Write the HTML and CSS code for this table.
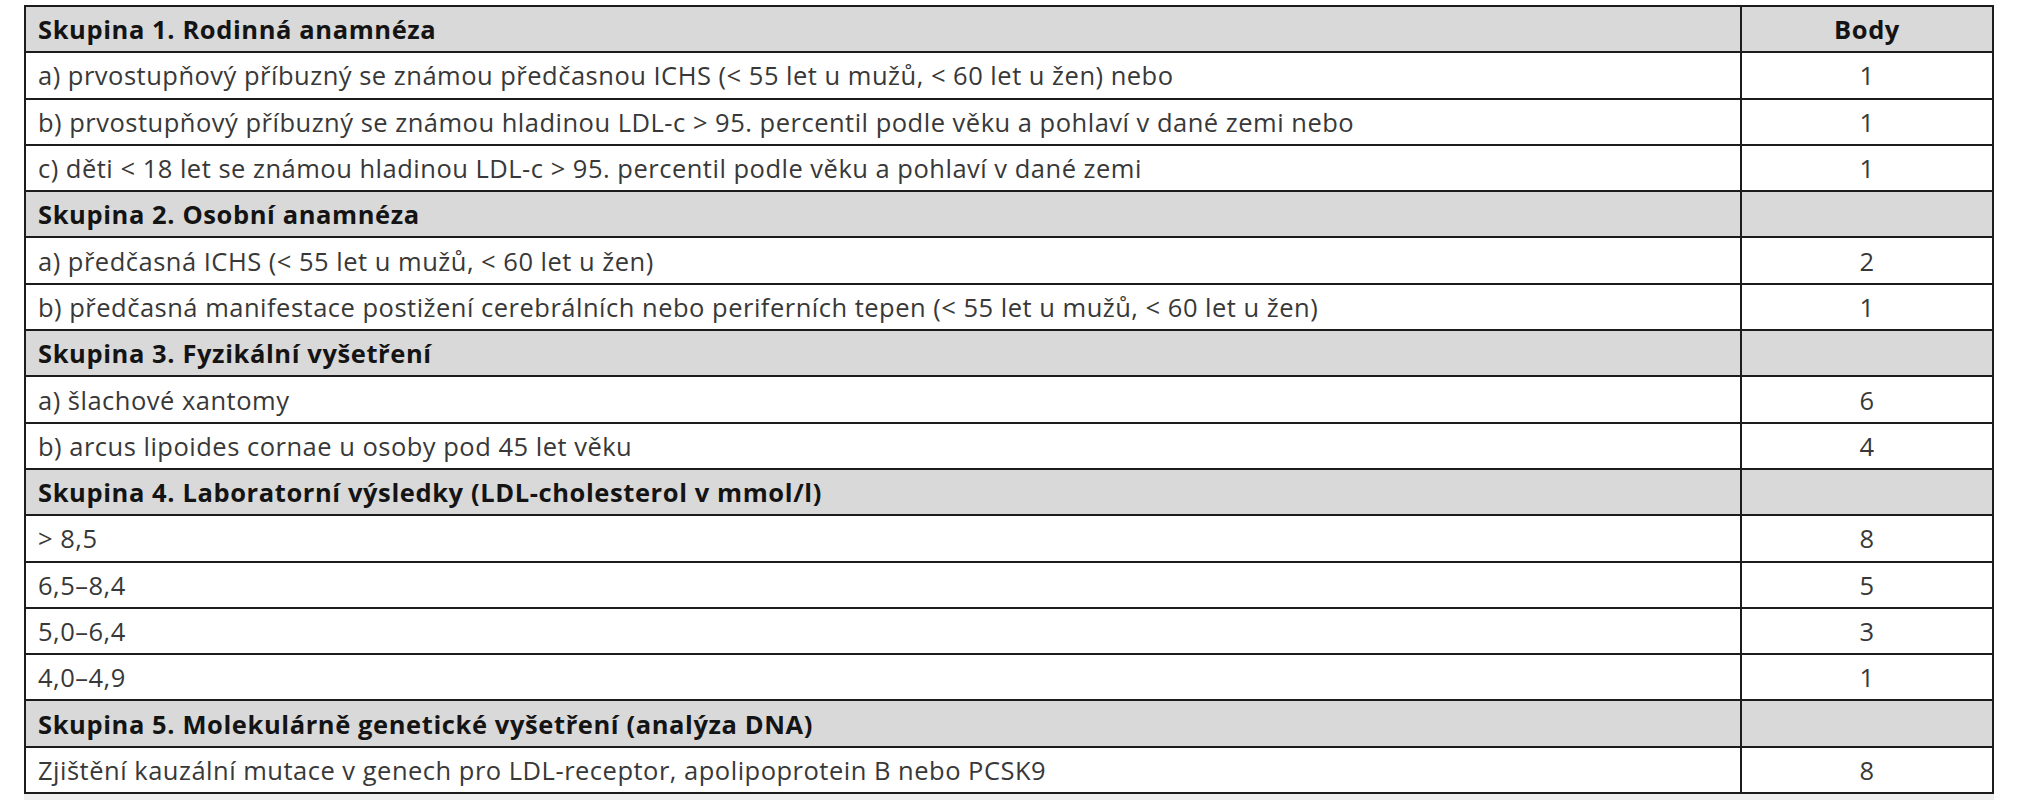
FILE: index.html
```html
<!DOCTYPE html>
<html lang="cs">
<head>
<meta charset="utf-8">
<title>Skóre</title>
<link rel="stylesheet" href="styles.css">
</head>
<body>
<div class="sheet">
<table class="score">
  <tr class="group"><td class="crit">Skupina 1. Rodinná anamnéza</td><td class="pts">Body</td></tr>
  <tr><td class="crit">a) prvostupňový příbuzný se známou předčasnou ICHS (&lt; 55 let u mužů, &lt; 60 let u žen) nebo</td><td class="pts">1</td></tr>
  <tr><td class="crit">b) prvostupňový příbuzný se známou hladinou LDL-c &gt; 95. percentil podle věku a pohlaví v dané zemi nebo</td><td class="pts">1</td></tr>
  <tr><td class="crit">c) děti &lt; 18 let se známou hladinou LDL-c &gt; 95. percentil podle věku a pohlaví v dané zemi</td><td class="pts">1</td></tr>
  <tr class="group"><td class="crit">Skupina 2. Osobní anamnéza</td><td class="pts"></td></tr>
  <tr><td class="crit">a) předčasná ICHS (&lt; 55 let u mužů, &lt; 60 let u žen)</td><td class="pts">2</td></tr>
  <tr><td class="crit">b) předčasná manifestace postižení cerebrálních nebo periferních tepen (&lt; 55 let u mužů, &lt; 60 let u žen)</td><td class="pts">1</td></tr>
  <tr class="group"><td class="crit">Skupina 3. Fyzikální vyšetření</td><td class="pts"></td></tr>
  <tr><td class="crit">a) šlachové xantomy</td><td class="pts">6</td></tr>
  <tr><td class="crit">b) arcus lipoides cornae u osoby pod 45 let věku</td><td class="pts">4</td></tr>
  <tr class="group"><td class="crit">Skupina 4. Laboratorní výsledky (LDL-cholesterol v mmol/l)</td><td class="pts"></td></tr>
  <tr><td class="crit">&gt; 8,5</td><td class="pts">8</td></tr>
  <tr><td class="crit">6,5–8,4</td><td class="pts">5</td></tr>
  <tr><td class="crit">5,0–6,4</td><td class="pts">3</td></tr>
  <tr><td class="crit">4,0–4,9</td><td class="pts">1</td></tr>
  <tr class="group"><td class="crit">Skupina 5. Molekulárně genetické vyšetření (analýza DNA)</td><td class="pts"></td></tr>
  <tr><td class="crit">Zjištění kauzální mutace v genech pro LDL-receptor, apolipoprotein B nebo PCSK9</td><td class="pts">8</td></tr>
</table>
</div>
</body>
</html>
```

FILE: styles.css
```css
html, body {
  margin: 0;
  padding: 0;
  background: #ffffff;
}

body {
  font-family: "Open Sans", "Noto Sans", "Liberation Sans", sans-serif;
  color: #383838;
}

.sheet {
  margin-left: 24px;
  padding-top: 5px;
  width: 1970px;
  height: 795px;
  background: linear-gradient(#ffffff, #ffffff) top / 100% 5px no-repeat, #efefef;
}

.score {
  border-collapse: collapse;
  width: 1970px;
  background: #ffffff;
  table-layout: fixed;
}

.score td {
  border: 2px solid #1c1c1c;
  height: 44.3px;
  padding: 0 0 0 12px;
  font-size: 25.5px;
  letter-spacing: 0.5px;
  line-height: 30px;
  vertical-align: middle;
  white-space: nowrap;
}

.score .pts {
  width: 250px;
  padding: 0;
  text-align: center;
}

.score .group td {
  background: #d9d9d9;
  color: #141414;
  font-weight: 700;
  letter-spacing: 0.6px;
}
```
